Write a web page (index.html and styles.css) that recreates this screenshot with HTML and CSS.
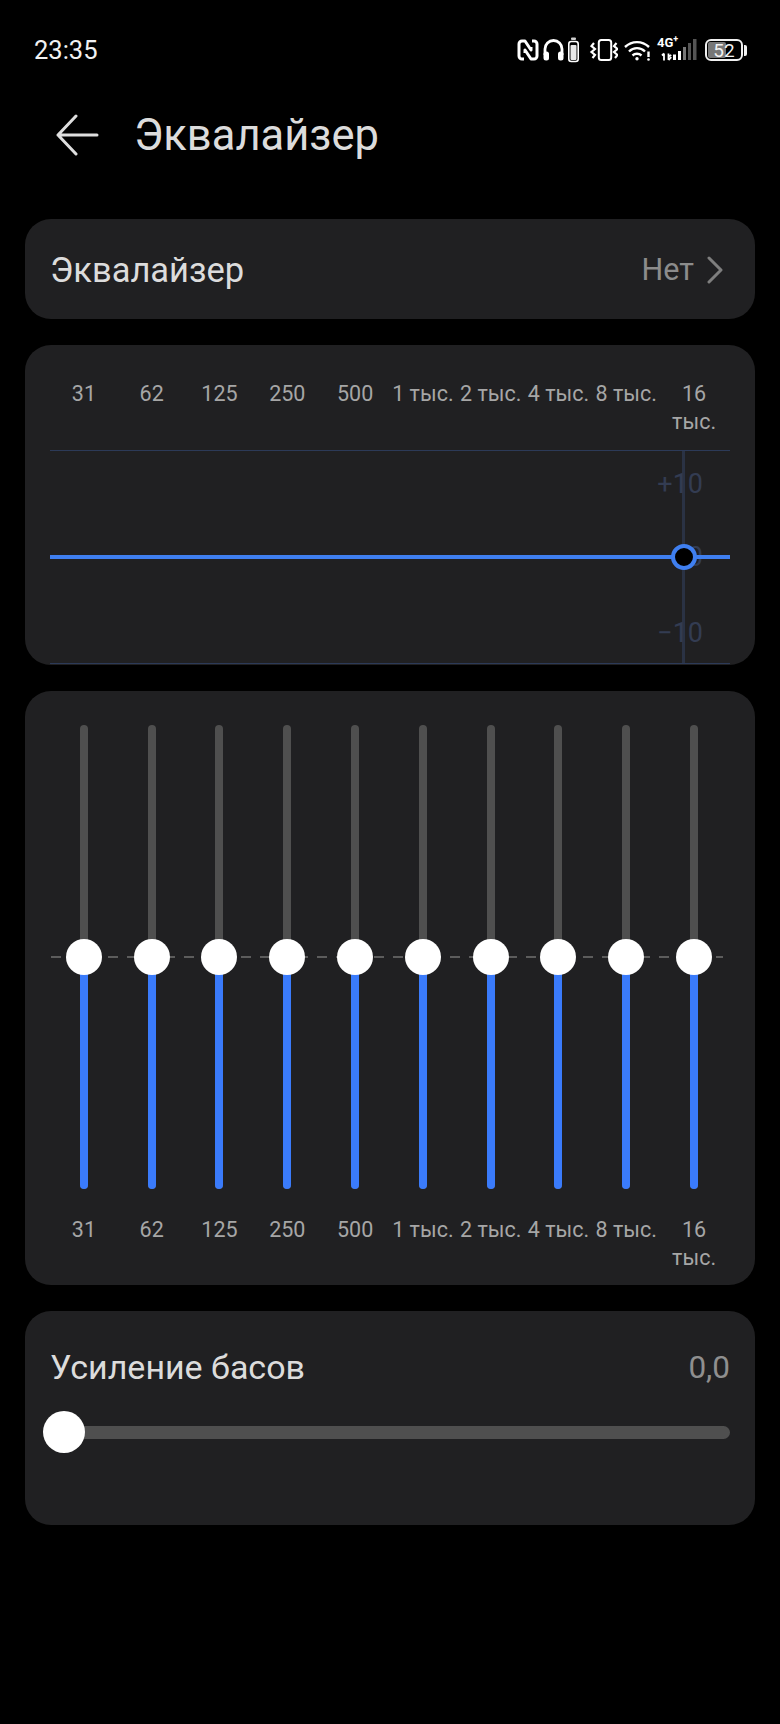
FILE: index.html
```html
<!DOCTYPE html>
<html lang="ru">
<head>
  <meta charset="utf-8">
  <meta name="viewport" content="width=device-width, initial-scale=1">
  <title>Эквалайзер</title>
  <link rel="stylesheet" href="styles.css">
</head>
<body>
  <div class="status">
    <span class="clock">23:35</span>
    <div class="status-icons">
      <!-- nfc -->
      <svg width="22" height="24" viewBox="0 0 22 24" fill="none" stroke="#fff" stroke-width="3" stroke-linejoin="round">
        <path d="M7 21H5a3 3 0 0 1-3-3V6a3 3 0 0 1 3-3h3l6 9V9"/>
        <path d="M15 3h2a3 3 0 0 1 3 3v12a3 3 0 0 1-3 3h-3l-6-9v3"/>
      </svg>
      <!-- headphones -->
      <svg width="21" height="24" viewBox="0 0 21 24" fill="none">
        <path d="M2 17v-6a8.500 8.500 0 0 1 17 0v6" stroke="#fff" stroke-width="2.800"/>
        <rect x="0.500" y="13.500" width="5.500" height="9" rx="2.500" fill="#fff"/>
        <rect x="15" y="13.500" width="5.500" height="9" rx="2.500" fill="#fff"/>
      </svg>
      <!-- charge case -->
      <svg width="11" height="26" viewBox="0 0 11 26" fill="none">
        <rect x="3" y="0.500" width="5" height="2.500" rx="1" fill="#cfcfcf"/>
        <rect x="0.800" y="4.500" width="9.400" height="20" rx="2.500" stroke="#fff" stroke-width="1.600"/>
        <rect x="2.500" y="8" width="6" height="15" rx="1" fill="#e8e8e8"/>
      </svg>
      <!-- vibrate -->
      <svg width="35" height="24" viewBox="0 0 35 24" fill="none" stroke="#fff">
        <rect x="15.800" y="2" width="12.400" height="20" rx="2.500" stroke-width="2"/>
        <path d="M11 5L8.500 8l3.500 3-3.500 3 3.500 3-2.500 3" stroke-width="2.200"/>
        <path d="M33.500 5L31 8l3.500 3-3.500 3 3.500 3-2.500 3" stroke-width="2.200"/>
      </svg>
      <!-- wifi -->
      <svg width="31" height="24" viewBox="0 0 31 24" fill="none" stroke="#fff" stroke-width="2.400">
        <path d="M3 9c7-6.500 17-6.500 24 0"/>
        <path d="M7 13.500c4.500-4.500 11.500-4.500 16 0"/>
        <path d="M10.500 17.500c2.500-2.300 6.500-2.300 9 0"/>
        <circle cx="15" cy="20.800" r="1.700" fill="#fff" stroke="none"/>
        <path d="M26.500 13.500v5.500"/>
        <circle cx="26.500" cy="21.500" r="1.300" fill="#fff" stroke="none"/>
      </svg>
      <!-- mobile network -->
      <div class="net">
        <span class="net-type">4G<sup>+</sup></span>
        <svg width="44" height="24" viewBox="0 0 44 24" fill="none">
          <path d="M7 15.500v7M5 17.500l2-2" stroke="#fff" stroke-width="1.800"/>
          <path d="M11.500 15.500v6.500M11.500 22l2.800-2.800M11.500 18.500l2.800-1.500" stroke="#fff" stroke-width="1.800"/>
          <rect x="16" y="16.500" width="3" height="5.500" fill="#fff"/>
          <rect x="21" y="13" width="3" height="9" fill="#fff"/>
          <rect x="26" y="9" width="3" height="13" fill="#777"/>
          <rect x="31" y="5" width="3" height="17" fill="#555"/>
          <rect x="36" y="1" width="3.500" height="21" fill="#555"/>
        </svg>
      </div>
      <div class="battery">
        <div class="battery-body">
          <div class="battery-fill"></div>
          <span class="battery-text">52</span>
        </div>
        <div class="battery-cap"></div>
      </div>
    </div>
  </div>

  <div class="header">
    <svg class="back" width="44" height="42" viewBox="0 0 44 42" fill="none" stroke="#dedede" stroke-width="3" stroke-linecap="round" stroke-linejoin="round">
      <path d="M42 21H3M21 2L3 21l18 19"/>
    </svg>
    <h1 class="title">Эквалайзер</h1>
  </div>

  <div class="main">
    <div class="card row">
      <span class="row-title">Эквалайзер</span>
      <span class="row-value">Нет</span>
      <svg class="chevron" width="16" height="28" viewBox="0 0 16 28" fill="none" stroke="#7e7e7e" stroke-width="3" stroke-linecap="round" stroke-linejoin="round">
        <path d="M2 2l12 12L2 26"/>
      </svg>
    </div>

    <div class="card curve-card">
      <div class="labels">
        <span>31</span><span>62</span><span>125</span><span>250</span><span>500</span>
        <span>1 тыс.</span><span>2 тыс.</span><span>4 тыс.</span><span>8 тыс.</span><span>16 тыс.</span>
      </div>
      <div class="curve">
        <div class="curve-axis"></div>
        <span class="db db-top">+10</span>
        <span class="db db-mid">0</span>
        <span class="db db-low">−10</span>
        <div class="curve-line"></div>
        <div class="curve-dot"></div>
      </div>
    </div>

    <div class="card bands-card">
      <div class="bands">
        <div class="zero-line"></div>
        <div class="band"><div class="band-track"><div class="band-fill"></div><div class="knob"></div></div></div>
        <div class="band"><div class="band-track"><div class="band-fill"></div><div class="knob"></div></div></div>
        <div class="band"><div class="band-track"><div class="band-fill"></div><div class="knob"></div></div></div>
        <div class="band"><div class="band-track"><div class="band-fill"></div><div class="knob"></div></div></div>
        <div class="band"><div class="band-track"><div class="band-fill"></div><div class="knob"></div></div></div>
        <div class="band"><div class="band-track"><div class="band-fill"></div><div class="knob"></div></div></div>
        <div class="band"><div class="band-track"><div class="band-fill"></div><div class="knob"></div></div></div>
        <div class="band"><div class="band-track"><div class="band-fill"></div><div class="knob"></div></div></div>
        <div class="band"><div class="band-track"><div class="band-fill"></div><div class="knob"></div></div></div>
        <div class="band"><div class="band-track"><div class="band-fill"></div><div class="knob"></div></div></div>
      </div>
      <div class="labels">
        <span>31</span><span>62</span><span>125</span><span>250</span><span>500</span>
        <span>1 тыс.</span><span>2 тыс.</span><span>4 тыс.</span><span>8 тыс.</span><span>16 тыс.</span>
      </div>
    </div>

    <div class="card bass-card">
      <div class="bass-head">
        <span class="bass-title">Усиление басов</span>
        <span class="bass-value">0,0</span>
      </div>
      <div class="bass-track"><div class="bass-knob"></div></div>
    </div>
  </div>
</body>
</html>
```

FILE: styles.css
```css
body {
  background-color: #000;
  color: #dedede;
  font-family: 'Roboto', 'Noto Sans', sans-serif;
  margin: 0;
  padding: 0;
}

/* status bar */
.status {
  display: flex;
  justify-content: space-between;
  align-items: center;
  height: 100px;
  padding: 0 33px 0 34px;
}
.clock {
  font-size: 25.5px;
  color: #f2f2f2;
}
.status-icons {
  display: flex;
  align-items: center;
  gap: 4px;
}
.net {
  position: relative;
  width: 44px;
  height: 24px;
}
.net-type {
  position: absolute;
  left: 0;
  top: -3px;
  font-size: 13px;
  font-weight: 700;
  color: #fff;
}
.net-type sup {
  font-size: 9px;
  line-height: 0;
}
.battery {
  display: flex;
  align-items: center;
  gap: 1px;
}
.battery-body {
  position: relative;
  display: flex;
  justify-content: center;
  align-items: center;
  box-sizing: border-box;
  width: 38px;
  height: 22px;
  border: 2px solid #f0f0f0;
  border-radius: 6px;
}
.battery-fill {
  position: absolute;
  left: 1px;
  top: 1px;
  bottom: 1px;
  width: 18px;
  background-color: #777;
  border-radius: 2px;
}
.battery-text {
  position: relative;
  font-size: 19px;
  color: #f2f2f2;
}
.battery-cap {
  width: 3px;
  height: 11px;
  background-color: #f0f0f0;
  border-radius: 0 2px 2px 0;
}

/* header */
.header {
  display: flex;
  align-items: center;
  height: 70px;
  padding-left: 55px;
  margin-bottom: 49px;
}
.back {
  margin-right: 35px;
}
.title {
  font-size: 43.5px;
  font-weight: 400;
  margin: 0;
  color: #dcdcdc;
}

.main {
  display: flex;
  flex-direction: column;
  gap: 26px;
  padding: 0 25px;
}
.card {
  background-color: #202022;
  border-radius: 26px;
  padding: 0 25px;
}

/* first row */
.row {
  display: flex;
  align-items: center;
  height: 99px;
  padding-top: 1px;
}
.row-title {
  flex: 1;
  font-size: 34.5px;
  color: #dcdcdc;
}
.row-value {
  font-size: 30.5px;
  color: #8c8c8c;
  margin-right: 13px;
}
.chevron {
  margin-right: 7px;
}

/* frequency labels, same grid for both cards */
.labels {
  display: grid;
  grid-template-columns: repeat(10, 1fr);
  width: 678px;
  font-size: 21.5px;
  line-height: 28px;
  text-align: center;
  color: #a6a6a6;
  min-height: 56px;
}

/* curve */
.curve-card {
  height: 320px;
  box-sizing: border-box;
  padding-top: 35px;
}
.curve {
  position: relative;
  height: 212px;
  margin-top: 14px;
  border-top: 1px solid #2c3a58;
  border-bottom: 1px solid #2c3a58;
}
.curve-axis {
  position: absolute;
  left: 632px;
  top: 0;
  bottom: 0;
  width: 3px;
  background-color: #2a3244;
}
.db {
  position: absolute;
  right: 27px;
  font-size: 27px;
  line-height: 30px;
  color: #333c52;
}
.db-top {
  top: 18px;
}
.db-mid {
  top: 91px;
}
.db-low {
  top: 167px;
}
.curve-line {
  position: absolute;
  left: 0;
  right: 0;
  top: 104px;
  height: 4px;
  background-color: #3f7ff0;
}
.curve-dot {
  position: absolute;
  left: 621px;
  top: 93px;
  box-sizing: border-box;
  width: 26px;
  height: 26px;
  background-color: #000;
  border: 4px solid #3f7ff0;
  border-radius: 50%;
}

/* sliders */
.bands-card {
  padding-top: 34px;
  padding-bottom: 13px;
}
.bands {
  position: relative;
  display: grid;
  grid-template-columns: repeat(10, 1fr);
  width: 678px;
  height: 464px;
  margin-bottom: 27px;
}
.zero-line {
  position: absolute;
  left: 1px;
  right: 5px;
  top: 231px;
  height: 2px;
  background-image: repeating-linear-gradient(to right, #5c5c5c 0, #5c5c5c 10px, transparent 10px, transparent 19px);
}
.band {
  display: flex;
  justify-content: center;
}
.band-track {
  position: relative;
  width: 8px;
  background-color: #4f4f4f;
  border-radius: 4px;
}
.band-fill {
  position: absolute;
  left: 0;
  right: 0;
  top: 232px;
  bottom: 0;
  background-color: #3a7bfb;
  border-radius: 0 0 4px 4px;
}
.knob {
  position: absolute;
  left: -14px;
  top: 214px;
  width: 36px;
  height: 36px;
  background-color: #fff;
  border-radius: 50%;
}

/* bass */
.bass-card {
  height: 214px;
  box-sizing: border-box;
  padding-top: 36px;
}
.bass-head {
  display: flex;
  justify-content: space-between;
  align-items: center;
  height: 40px;
}
.bass-title {
  font-size: 34px;
  color: #dcdcdc;
}
.bass-value {
  font-size: 31.5px;
  color: #8f8f8f;
}
.bass-track {
  position: relative;
  height: 13px;
  margin-top: 39px;
  background-color: #4f4f4f;
  border-radius: 7px;
}
.bass-knob {
  position: absolute;
  left: -7px;
  top: -15px;
  width: 42px;
  height: 42px;
  background-color: #fff;
  border-radius: 50%;
}
```
